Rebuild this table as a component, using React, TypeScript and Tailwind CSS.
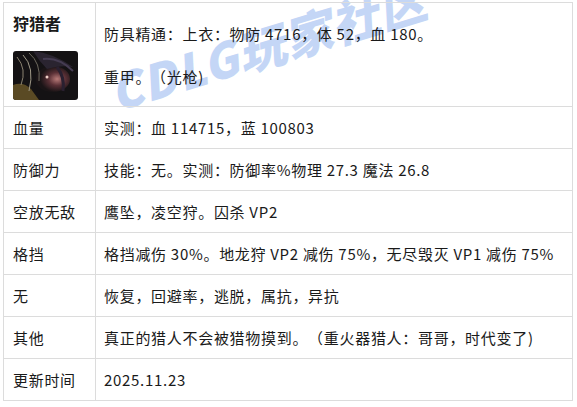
const rows: [string, string][] = [
  ['血量', '实测：血 114715，蓝 100803'],
  ['防御力', '技能：无。实测：防御率%物理 27.3 魔法 26.8'],
  ['空放无敌', '鹰坠，凌空狩。囚杀 VP2'],
  ['格挡', '格挡减伤 30%。地龙狩 VP2 减伤 75%，无尽毁灭 VP1 减伤 75%'],
  ['无', '恢复，回避率，逃脱，属抗，异抗'],
  ['其他', '真正的猎人不会被猎物摸到。（重火器猎人：哥哥，时代变了)'],
  ['更新时间', '2025.11.23'],
];

function Avatar() {
  return (
    <svg width="65" height="49" viewBox="0 0 65 49" className="rounded-[3px] block">
      <defs>
        <radialGradient id="face" cx="0.62" cy="0.5" r="0.5">
          <stop offset="0" stopColor="#b87a78" />
          <stop offset="0.5" stopColor="#5a3036" />
          <stop offset="1" stopColor="#1a1416" />
        </radialGradient>
      </defs>
      <rect width="65" height="49" fill="#141214" />
      <ellipse cx="40" cy="28" rx="17" ry="13" fill="url(#face)" />
      <path d="M0 49 L0 34 Q10 30 18 38 L26 49 Z" fill="#5a4a24" />
      <path d="M4 6 Q14 18 8 34" stroke="#8a8270" strokeWidth="1" fill="none" />
      <path d="M10 4 Q22 16 16 40" stroke="#a09a88" strokeWidth="1" fill="none" />
      <path d="M16 2 Q28 12 26 30" stroke="#6e6a5e" strokeWidth="1" fill="none" />
      <path d="M20 0 Q40 2 60 16 Q46 14 34 18 Q26 10 20 0 Z" fill="#2a2430" />
      <path d="M30 8 Q46 6 60 20" stroke="#453c52" strokeWidth="2" fill="none" />
      <path d="M44 16 Q52 26 50 40" stroke="#2a2030" strokeWidth="3" fill="none" />
      <circle cx="34" cy="26" r="1.5" fill="#f0d0c8" />
    </svg>
  );
}

export default function App() {
  return (
    <div
      className="relative w-[577px] h-[407px] bg-white text-[#1a1a1a] overflow-hidden"
      style={{ fontFamily: '"Noto Sans CJK SC", "Noto Sans", sans-serif' }}
    >
      <div
        className="absolute left-[110px] top-[68px] text-[48px] leading-none font-black italic text-[#c4d6f6] -rotate-[17deg] origin-left whitespace-nowrap pointer-events-none tracking-[1px]"
        style={{ fontFamily: '"Noto Sans CJK SC", sans-serif' }}
      >
        CDLG玩家社区
      </div>
      <div className="absolute left-[3px] top-[2px]">
        <table className="border-collapse text-[15px] leading-[20px] tracking-[0.7px] [text-spacing-trim:space-all]">
          <tbody>
            <tr>
              <td className="border border-[#dcdcdc] w-[92px] h-[104px] align-top pl-[9px] pt-[10px]">
                <div className="font-bold text-[16px] leading-[20px] tracking-normal">狩猎者</div>
                <div className="mt-[18px]">
                  <Avatar />
                </div>
              </td>
              <td className="border border-[#dcdcdc] w-[477px] align-top pl-[8px] pt-[21px]">
                <p>防具精通：上衣：物防 4716，体 52，血 180。</p>
                <p className="mt-[23px]">重甲。（光枪)</p>
              </td>
            </tr>
            {rows.map(([k, v]) => (
              <tr key={k}>
                <td className="border border-[#dcdcdc] h-[42px] pl-[9px] align-middle">{k}</td>
                <td className="border border-[#dcdcdc] pl-[8px] align-middle whitespace-nowrap">{v}</td>
              </tr>
            ))}
          </tbody>
        </table>
      </div>
    </div>
  );
}
